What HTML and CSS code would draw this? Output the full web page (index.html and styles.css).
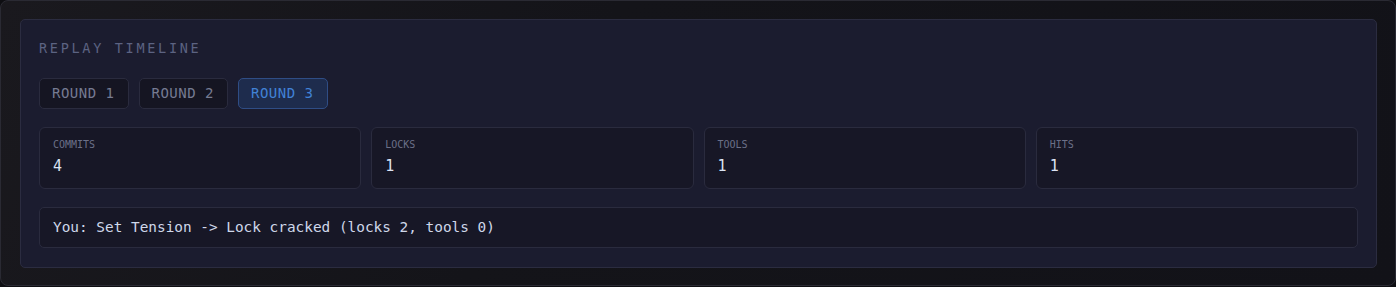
FILE: index.html
```html
<!DOCTYPE html>
<html lang="en">
<head>
<meta charset="utf-8">
<title>Replay Timeline</title>
<link rel="stylesheet" href="styles.css">
</head>
<body>
<div class="frame">
  <section class="panel">
    <h2 class="title">REPLAY TIMELINE</h2>
    <div class="rounds">
      <button class="round">ROUND 1</button>
      <button class="round">ROUND 2</button>
      <button class="round active">ROUND 3</button>
    </div>
    <div class="stats">
      <div class="stat"><div class="label">COMMITS</div><div class="value">4</div></div>
      <div class="stat"><div class="label">LOCKS</div><div class="value">1</div></div>
      <div class="stat"><div class="label">TOOLS</div><div class="value">1</div></div>
      <div class="stat"><div class="label">HITS</div><div class="value">1</div></div>
    </div>
    <div class="log">You: Set Tension -&gt; Lock cracked (locks 2, tools 0)</div>
  </section>
</div>
</body>
</html>
```
FILE: styles.css
```css
* { box-sizing: border-box; }
html, body {
  margin: 0;
  padding: 0;
  background: #0e0e12;
}
body {
  font-family: "DejaVu Sans Mono", "Liberation Mono", monospace;
  width: 1396px;
  height: 287px;
}
.frame {
  height: 286px;
  border: 1px solid #2a2a33;
  border-radius: 8px;
  background: linear-gradient(120deg, #1a191e 0%, #141419 40%, #121218 100%);
  padding: 18px 18px 18px 19px;
}
.panel {
  height: 249px;
  background: #1b1c2f;
  border: 1px solid #2b2c40;
  border-radius: 5px;
  padding: 18px;
}
.title {
  margin: 2px 0 21px;
  font-size: 13.5px;
  line-height: 17px;
  font-weight: normal;
  letter-spacing: 2.7px;
  color: #5c6382;
}
.rounds {
  display: flex;
  gap: 10px;
}
.round {
  font-family: inherit;
  font-size: 14px;
  line-height: 17px;
  letter-spacing: 0.5px;
  white-space: nowrap;
  padding: 6px 0 6px 12px;
  width: 89.5px;
  text-align: left;
  background: #151522;
  border: 1px solid #2a2b3e;
  border-radius: 5px;
  color: #767b92;
}
.round.active {
  background: #1e2c4d;
  border-color: #2f4d85;
  color: #4182d6;
}
.stats {
  display: grid;
  grid-template-columns: repeat(4, 1fr);
  gap: 10px;
  margin-top: 18px;
}
.stat {
  background: #171726;
  border: 1px solid #2a2b3e;
  border-radius: 6px;
  padding: 11px 13px 12px;
}
.label {
  font-size: 10px;
  line-height: 12px;
  color: #6b7088;
}
.value {
  margin-top: 5px;
  font-size: 15px;
  line-height: 20px;
  color: #dbe3f3;
}
.log {
  margin-top: 18px;
  background: #171726;
  border: 1px solid #2a2b3e;
  border-radius: 5px;
  padding: 11px 13px;
  font-size: 14.4px;
  line-height: 17px;
  color: #cfd8ea;
}
```
